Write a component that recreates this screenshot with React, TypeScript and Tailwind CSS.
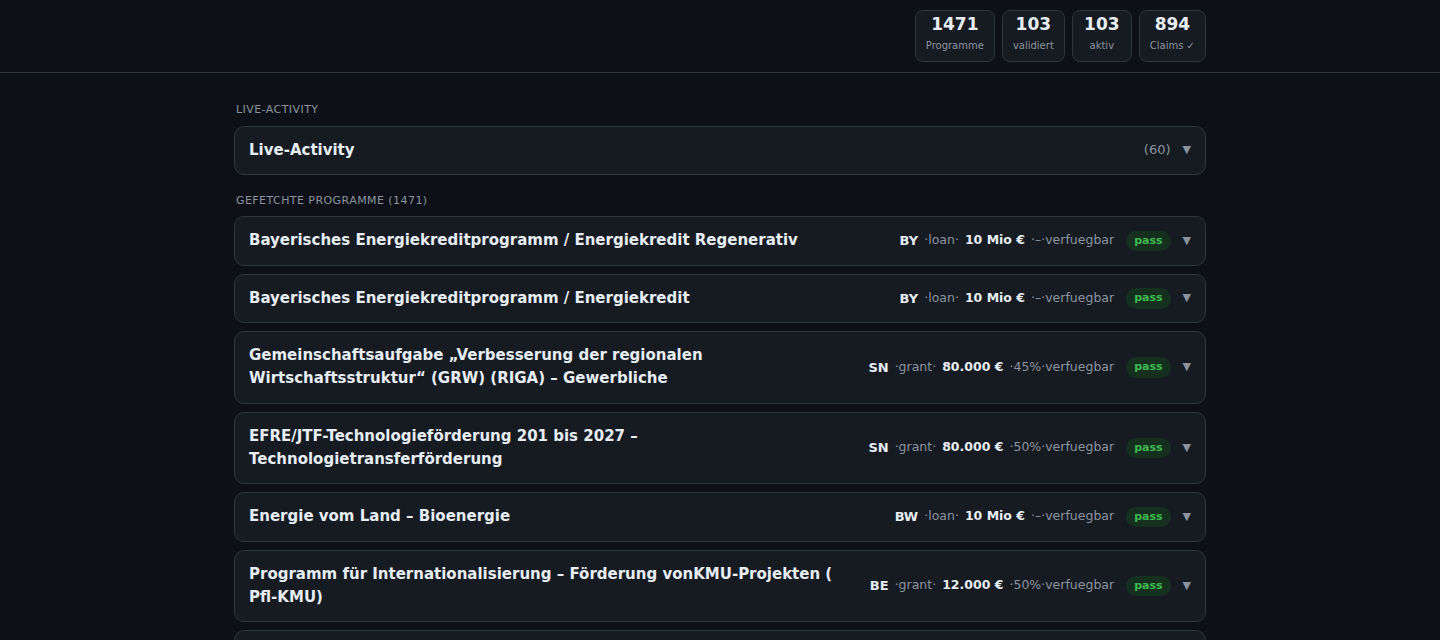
const stats = [
  { value: "1471", label: "Programme" },
  { value: "103", label: "validiert" },
  { value: "103", label: "aktiv" },
  { value: "894", label: "Claims ✓" },
];

interface IProgram {
  title: string;
  state: string;
  kind: string;
  amount: string;
  rate: string;
}

const programs: IProgram[] = [
  {
    title: "Bayerisches Energiekreditprogramm / Energiekredit Regenerativ",
    state: "BY",
    kind: "loan",
    amount: "10 Mio €",
    rate: "–",
  },
  {
    title: "Bayerisches Energiekreditprogramm / Energiekredit",
    state: "BY",
    kind: "loan",
    amount: "10 Mio €",
    rate: "–",
  },
  {
    title:
      "Gemeinschaftsaufgabe „Verbesserung der regionalen Wirtschaftsstruktur“ (GRW) (RIGA) – Gewerbliche",
    state: "SN",
    kind: "grant",
    amount: "80.000 €",
    rate: "45%",
  },
  {
    title: "EFRE/JTF-Technologieförderung 201 bis 2027 – Technologietransferförderung",
    state: "SN",
    kind: "grant",
    amount: "80.000 €",
    rate: "50%",
  },
  {
    title: "Energie vom Land – Bioenergie",
    state: "BW",
    kind: "loan",
    amount: "10 Mio €",
    rate: "–",
  },
  {
    title: "Programm für Internationalisierung – Förderung vonKMU-Projekten ( Pfl-KMU)",
    state: "BE",
    kind: "grant",
    amount: "12.000 €",
    rate: "50%",
  },
  {
    title: "Mittelstandskreditprogramm – Investitionen",
    state: "BY",
    kind: "loan",
    amount: "5 Mio €",
    rate: "–",
  },
];

function ProgramRow({ program }: { program: IProgram }) {
  return (
    <div className="flex items-center gap-6 rounded-[10px] border border-[#30363d] bg-[#161b22] px-[14px] py-[12.25px]">
      {/* title */}
      <h3 className="min-w-0 flex-1 text-[15px] font-bold leading-[23px] text-[#e6edf3]">
        {program.title}
      </h3>
      {/* meta */}
      <div className="flex shrink-0 items-center gap-[6px] text-[12.5px]">
        <span className="text-[13px] font-bold text-[#e6edf3]">{program.state}</span>
        <span className="text-[#8b949e]">·{program.kind}·</span>
        <span className="font-bold text-[#e6edf3]">{program.amount}</span>
        <span className="text-[#8b949e]">·{program.rate}·verfuegbar</span>
        <span className="ml-[6px] rounded-full bg-[#15301f] px-2 py-[2px] text-[11px] font-bold text-[#3fb950]">
          pass
        </span>
        <span className="ml-[6px] text-[11px] text-[#8b949e]">▼</span>
      </div>
    </div>
  );
}

export default function App() {
  return (
    <div
      className="min-h-screen bg-[#0d1117] text-[#e6edf3]"
      style={{ fontFamily: '"DejaVu Sans", sans-serif' }}
    >
      {/* header */}
      <header className="h-[73px] border-b border-[#30363d]">
        <div className="mx-auto flex h-full max-w-[972px] items-center justify-end gap-[7px]">
          {stats.map((s) => (
            <div
              key={s.label}
              className="flex h-[52px] min-w-[60px] flex-col items-center rounded-[8px] border border-[#30363d] bg-[#161b22] px-[10px] pt-[1px]"
            >
              <span className="text-[17px] font-bold leading-[24px] text-[#e6edf3]">
                {s.value}
              </span>
              <span className="mt-[2px] text-[10px] leading-[16px] text-[#8b949e]">
                {s.label}
              </span>
            </div>
          ))}
        </div>
      </header>

      <main className="mx-auto max-w-[972px] pt-[29px]">
        <p className="mb-[7px] px-[2px] text-[11px] uppercase tracking-[0.04em] text-[#8b949e]">
          Live-Activity
        </p>
        <div className="flex h-[49px] items-center rounded-[10px] border border-[#30363d] bg-[#161b22] px-[14px]">
          <h3 className="flex-1 text-[15px] font-bold text-[#e6edf3]">Live-Activity</h3>
          <span className="text-[13px] text-[#8b949e]">(60)</span>
          <span className="ml-3 text-[11px] text-[#8b949e]">▼</span>
        </div>

        <p className="mb-[7px] mt-[18px] px-[2px] text-[11px] uppercase tracking-[0.04em] text-[#8b949e]">
          Gefetchte Programme (1471)
        </p>
        <div className="flex flex-col gap-2">
          {programs.map((p, i) => (
            <ProgramRow key={i} program={p} />
          ))}
        </div>
      </main>
    </div>
  );
}
